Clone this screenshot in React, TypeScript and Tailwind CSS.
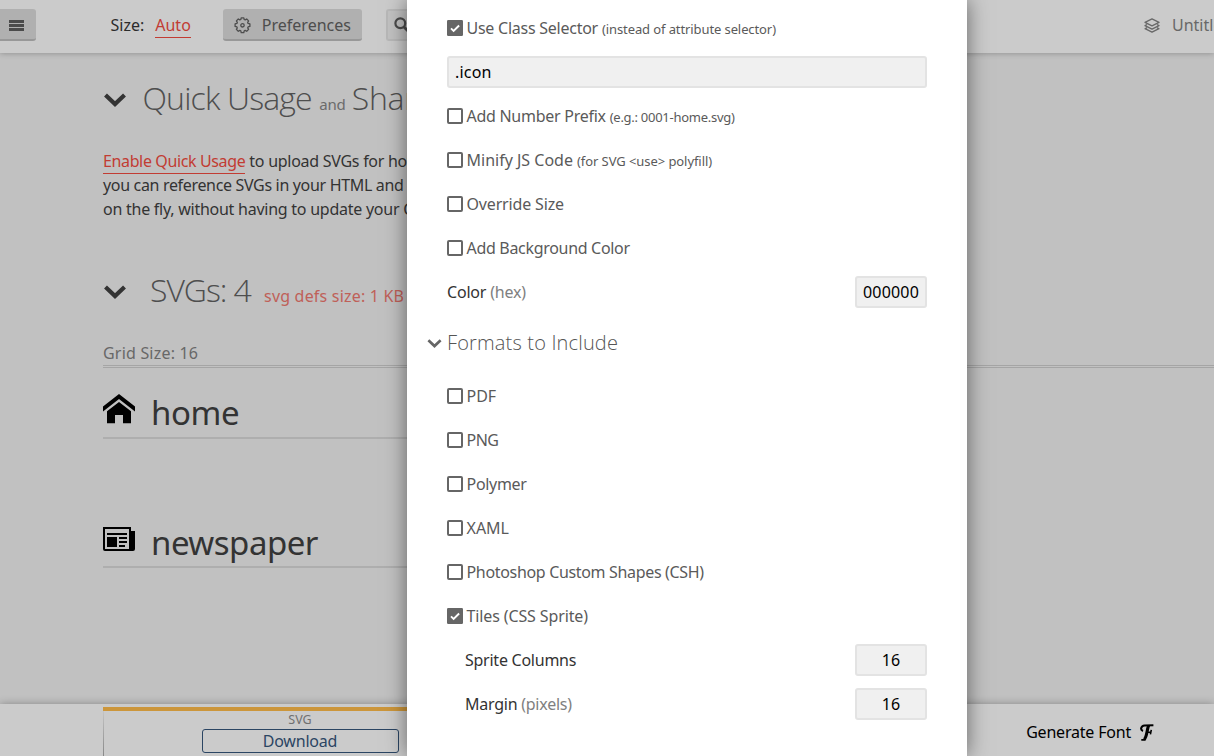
import React from "react";

type IconProps = { className?: string };

const MenuIcon = () => (
  <svg className="h-3 w-[15px] shrink-0" viewBox="0 0 15 12" fill="#4b4b4b">
    <rect y="0" width="15" height="3" />
    <rect y="4" width="15" height="3" />
    <rect y="8" width="15" height="3" />
  </svg>
);

const GearIcon = () => (
  <svg className="size-[17px] shrink-0" viewBox="0 0 17 17" fill="none" stroke="#4d4d4d" strokeWidth="1.3" strokeLinejoin="round">
    <path d="M7.2 .8h2.6l.4 1.7 1 .4 1.5-.9 1.9 1.9-.9 1.5.4 1 1.8.5v2.5l-1.8.5-.4 1 .9 1.5-1.9 1.9-1.5-.9-1 .4-.4 1.8H7.2l-.4-1.8-1-.4-1.5.9-1.9-1.9.9-1.5-.4-1-1.8-.5V6.9l1.8-.5.4-1-.9-1.5L4.300 2l1.5.9 1-.4z" />
    <circle cx="8.5" cy="8.3" r="1.7" />
  </svg>
);

const SearchIcon = () => (
  <svg className="size-4 shrink-0" viewBox="0 0 16 16" fill="none" stroke="#4b4b4b">
    <circle cx="6.300" cy="6.300" r="4.900" strokeWidth="2.2" />
    <path d="M10 10l5 5" strokeWidth="2.8" />
  </svg>
);

const LayersIcon = () => (
  <svg className="h-[15px] w-4 shrink-0" viewBox="0 0 16 15" fill="none" stroke="#686868" strokeWidth="1.3" strokeLinejoin="round">
    <path d="M8 .9l7 3.500-7 3.500-7-3.500z" />
    <path d="M3 6.500l-2 1.100 7 3.500 7-3.500-2-1.100" />
    <path d="M3 9.600l-2 1.100 7 3.500 7-3.500-2-1.100" />
  </svg>
);

const Chevron = ({ className }: IconProps) => (
  <svg className={className} viewBox="0 0 22 14" fill="none" stroke="currentColor" strokeWidth="4.200">
    <path d="M1.500 2L11 11l9.500-9" />
  </svg>
);

const HomeIcon = () => (
  <svg className="h-[30px] w-8 shrink-0" viewBox="0 0 32 30" fill="#000">
    <path d="M16 0l16 12.400v5L16 5.100 0 17.400v-5z" />
    <path d="M16 8l12 9.200V29.300h-8V21h-8v8.300H4V17.200z" />
  </svg>
);

const NewspaperIcon = () => (
  <svg className="h-6 w-8 shrink-0" viewBox="0 0 32 24" fill="#000">
    <path fillRule="evenodd" d="M0 0h28v4h4v18a2 2 0 0 1-2 2H2a2 2 0 0 1-2-2zM2 2v20h24V2z" />
    <path d="M4 6h20v2H4zM4 10h10v10H4zM16 10h8v2h-8zM16 14h8v2h-8zM16 18h6v2h-6z" />
  </svg>
);

const FontIcon = () => (
  <svg className="h-[17px] w-3.5 shrink-0" viewBox="0 0 14 17" fill="none" stroke="#000">
    <path d="M3 7C-.2 5.800 1 1.800 4.500 1.500l8.900-.2" strokeWidth="2.100" />
    <path d="M8.600 1.500C6.800 6 7 13 4.200 15.500" strokeWidth="3.100" />
    <path d="M6.500 8.300h4.200M11.300 5.800l-.9 4.600M1.300 15.900h4" strokeWidth="1.600" />
  </svg>
);

const Checkbox = ({ checked }: { checked?: boolean }) =>
  checked ? (
    <svg className="size-4 shrink-0" viewBox="0 0 16 16">
      <rect width="16" height="16" rx="1.200" fill="#666" />
      <path d="M4 8.400l2.600 2.600 5.500-5.500" fill="none" stroke="#fff" strokeWidth="1.900" />
    </svg>
  ) : (
    <span className="size-4 shrink-0 rounded-[2px] border-2 border-[#666]" />
  );

type OptionProps = { label: string; tracking?: string; note?: string; noteTracking?: string; checked?: boolean };

const Option = ({ label, tracking = "", note, noteTracking = "", checked }: OptionProps) => (
  <label className="flex h-11 items-center text-[#5a5a5a]">
    <Checkbox checked={checked} />
    <span className="ml-[3.500px] flex items-baseline gap-1 leading-6 whitespace-nowrap">
      <span className={tracking}>{label}</span>
      {note && <span className={"text-[13px] " + noteTracking}>{note}</span>}
    </span>
  </label>
);

type FieldProps = { label: string; hint?: string; value: string; indent?: boolean; tracking?: string };

const Field = ({ label, hint, value, indent, tracking = "" }: FieldProps) => (
  <div className={indent ? "flex h-11 items-center justify-between pl-[18px]" : "flex h-11 items-center justify-between"}>
    <span className={"text-[#333] " + tracking}>
      {label} {hint && <span className="text-[#808080]">{hint}</span>}
    </span>
    <span className="flex h-8 w-[72px] items-center justify-center rounded-[3px] border-2 border-[#e3e3e3] bg-[#f0f0f0] tracking-[0.2px] text-black">
      {value}
    </span>
  </div>
);

const general: OptionProps[] = [
  { label: "Add Number Prefix", tracking: "tracking-[-0.27px]", note: "(e.g.: 0001-home.svg)", noteTracking: "tracking-[-0.27px]" },
  { label: "Minify JS Code", note: "(for SVG <use> polyfill)", noteTracking: "tracking-[-0.07px]" },
  { label: "Override Size", tracking: "tracking-[-0.16px]" },
  { label: "Add Background Color", tracking: "tracking-[-0.31px]" },
];

const formats: OptionProps[] = [
  { label: "PDF" },
  { label: "PNG", tracking: "tracking-[-0.5px]" },
  { label: "Polymer", tracking: "tracking-[-0.3px]" },
  { label: "XAML" },
  { label: "Photoshop Custom Shapes (CSH)", tracking: "tracking-[-0.33px]" },
  { label: "Tiles (CSS Sprite)", tracking: "tracking-[-0.12px]", checked: true },
];

const Header = () => (
  <header className="z-10 flex h-[53px] shrink-0 items-center bg-[#cbcbcb] pb-[3px] shadow-[0_0_6px_rgba(0,0,0,0.3)]">
    <div className="flex h-8 w-9 items-center rounded-r-[3px] border-b-2 border-[#989898] bg-[#b0b0b0] pt-[3px] pl-[9px]">
      <MenuIcon />
    </div>
    <span className="ml-[74.500px] text-[#2c2c2c]">Size:</span>
    <a className="mt-px ml-[11px] h-[25px] border-b border-[#c23c33] text-[#c23c33]">Auto</a>
    <div className="ml-8 flex h-8 w-[139px] items-center rounded-[3px] border-b-2 border-[#989898] bg-[#b0b0b0] pt-0.5 pl-[11px] text-[#4d4d4d]">
      <GearIcon />
      <span className="ml-[11px]">Preferences</span>
    </div>
    <div className="ml-6 flex h-8 w-40 items-center rounded-[3px] border-2 border-[#b8b8b8] bg-[#c2c2c2] pl-[6px]">
      <SearchIcon />
    </div>
    <div className="ml-auto flex w-[70px] items-center gap-3 whitespace-nowrap text-[#686868]">
      <LayersIcon />
      <span>Untitled Project</span>
    </div>
  </header>
);

const Content = () => (
  <main className="flex min-h-0 flex-1 flex-col pl-[103px] whitespace-nowrap text-[#333]">
    <section className="flex h-24 flex-col">
      <h2 className="flex items-baseline pt-[23px] font-['Open_Sans',sans-serif] text-[32px] leading-[44px] font-light tracking-[-0.85px] text-[#4e4e4e]">
        <Chevron className="mr-[16.500px] ml-px h-3.5 w-[22px] -translate-y-[3px] text-[#333]" />
        <span>Quick Usage</span>
        <span className="ml-[7.500px] font-['Noto_Sans',sans-serif] text-[15px] font-normal tracking-[-0.2px] text-[#6b6b6b]">and</span>
        <span className="ml-1.5 tracking-[-0.2px]">Sharing</span>
      </h2>
    </section>
    <section className="flex flex-col items-start leading-6">
      <div className="flex h-6">
        <a className="mr-1 h-[25px] border-b border-[#c23c33] tracking-[-0.37px] text-[#c23c33]">Enable Quick Usage</a>
        <span className="tracking-[-0.27px]">to upload SVGs for hotlinking, so</span>
      </div>
      <span className="tracking-[-0.33px]">you can reference SVGs in your HTML and</span>
      <span className="tracking-[-0.25px]">on the fly, without having to update your Code.</span>
    </section>
    <section className="mt-[47px] flex flex-col">
      <h2 className="flex items-baseline font-['Open_Sans',sans-serif] text-[32px] leading-[44px] font-light tracking-[-1.050px] text-[#4e4e4e]">
        <Chevron className="mr-6 ml-px h-3.5 w-[22px] -translate-y-[3px] text-[#333]" />
        <span>SVGs: 4</span>
        <span className="ml-[13.200px] font-['Noto_Sans',sans-serif] text-[16px] font-normal tracking-[0.2px] text-[#bf6058]">svg defs size: 1 KB</span>
      </h2>
      <div className="mt-[23px] flex h-[27px] items-start border-b-[3px] border-double border-[#a5a5a5] leading-6 tracking-[0.2px] text-[#686868]">
        Grid Size: 16
      </div>
      <div className="flex h-[71px] w-[500px] items-end border-b-2 border-[#aeaeae] pb-[13px] text-[33px]">
        <HomeIcon />
        <span className="ml-4 translate-y-1 leading-[30px] tracking-[-0.4px]">home</span>
      </div>
      <div className="flex h-[129px] w-[500px] items-end border-b-2 border-[#aeaeae] pb-[15px] text-[33px]">
        <NewspaperIcon />
        <span className="ml-4 translate-y-1 leading-[24px] tracking-[-0.5px]">newspaper</span>
      </div>
    </section>
  </main>
);

const Footer = () => (
  <footer className="z-10 flex h-[52px] shrink-0 justify-between bg-[#cbcbcb] pl-[103px] shadow-[0_0_8px_rgba(0,0,0,0.3)]">
    <div className="flex pt-[3px]">
      <span className="mt-1 w-px bg-linear-to-b from-[#c4c4c4] to-[#888]" />
      <div className="-ml-px flex w-[394px] flex-col items-center border-t-4 border-[#cc963b]">
        <span className="pt-px text-[12.500px] leading-4 text-[#707070]">SVG</span>
        <span className="mt-px h-6 w-[197px] rounded-[3px] border border-[#2b4563] text-center leading-[23px] tracking-[-0.2px] text-[#2b4563]">
          Download
        </span>
      </div>
    </div>
    <div className="mr-[60px] flex items-center gap-[9px] pt-1 tracking-[-0.2px] text-black">
      Generate Font
      <FontIcon />
    </div>
  </footer>
);

const SettingsPanel = () => (
  <aside className="absolute inset-y-0 left-[407px] z-20 flex w-[560px] flex-col bg-white px-10 pt-1.5 shadow-[0_0_20px_rgba(0,0,0,0.5)]">
    <Option checked label="Use Class Selector" tracking="tracking-[-0.25px]" note="(instead of attribute selector)" noteTracking="tracking-[-0.1px]" />
    <div className="flex h-11 items-center">
      <span className="flex h-8 w-full items-center rounded-[3px] border-2 border-[#e3e3e3] bg-[#f0f0f0] pl-1.5 tracking-[0.2px] text-black">.icon</span>
    </div>
    {general.map((o) => (
      <Option key={o.label} {...o} />
    ))}
    <Field label="Color" hint="(hex)" value="000000" tracking="tracking-[-0.2px]" />
    <h3 className="-ml-[20.500px] flex h-[60px] items-center pb-0.5 font-['Open_Sans',sans-serif] text-[20px] font-light text-[#555]">
      <Chevron className="mr-[5.500px] h-[9px] w-[15px] text-[#666]" />
      <span className="tracking-[0.16px]">Formats to Include</span>
    </h3>
    {formats.map((o) => (
      <Option key={o.label} {...o} />
    ))}
    <Field indent label="Sprite Columns" value="16" tracking="tracking-[-0.25px]" />
    <Field indent label="Margin" hint="(pixels)" value="16" tracking="tracking-[-0.25px]" />
  </aside>
);

export default function App() {
  return (
    <div className="relative flex h-[756px] w-full flex-col overflow-hidden bg-[#c1c1c1] font-['Noto_Sans',sans-serif] text-base">
      <Header />
      <Content />
      <Footer />
      <SettingsPanel />
    </div>
  );
}
